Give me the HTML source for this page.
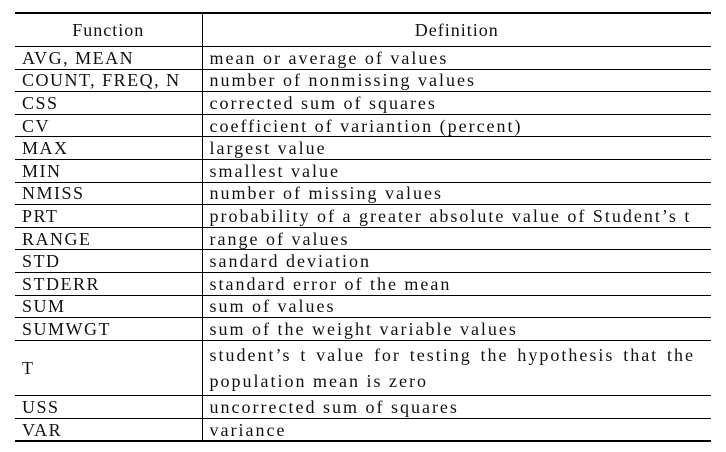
<!DOCTYPE html>
<html><head><meta charset="utf-8"><style>
body{margin:0;background:#fff;width:726px;height:452px;overflow:hidden;font-family:"Liberation Serif","Noto Serif CJK SC",serif;color:#111;font-size:18px;}
table{position:absolute;left:15px;top:12px;width:696px;border-collapse:collapse;table-layout:fixed;}
td{border-bottom:1px solid #000;padding:0 0 0 7px;height:21.6px;line-height:20px;letter-spacing:2px;word-spacing:0px;white-space:nowrap;overflow:hidden;}
td:first-child{border-right:1px solid #000;letter-spacing:1.5px;}
tr.h td{height:32px;text-align:center;padding:0;border-top:2px solid #000;letter-spacing:1px;}
tr.t td{height:54.5px;line-height:26px;}
tr:last-child td{border-bottom:2px solid #000;}
.j{text-align:justify;text-align-last:justify;padding-right:16px;}
</style></head><body>
<table>
<colgroup><col style="width:187px"><col></colgroup>
<tr class="h"><td>Function</td><td>Definition</td></tr>
<tr><td>AVG, MEAN</td><td>mean or average of values</td></tr>
<tr><td>COUNT, FREQ, N</td><td>number of nonmissing values</td></tr>
<tr><td>CSS</td><td>corrected sum of squares</td></tr>
<tr><td>CV</td><td>coefficient of variantion (percent)</td></tr>
<tr><td>MAX</td><td>largest value</td></tr>
<tr><td>MIN</td><td>smallest value</td></tr>
<tr><td>NMISS</td><td>number of missing values</td></tr>
<tr><td>PRT</td><td>probability of a greater absolute value of Student’s t</td></tr>
<tr><td>RANGE</td><td>range of values</td></tr>
<tr><td>STD</td><td>sandard deviation</td></tr>
<tr><td>STDERR</td><td>standard error of the mean</td></tr>
<tr><td>SUM</td><td>sum of values</td></tr>
<tr><td>SUMWGT</td><td>sum of the weight variable values</td></tr>
<tr class="t"><td>T</td><td><div class="j">student’s t value for testing the hypothesis that the</div><div>population mean is zero</div></td></tr>
<tr><td>USS</td><td>uncorrected sum of squares</td></tr>
<tr><td>VAR</td><td>variance</td></tr>
</table>
</body></html>
